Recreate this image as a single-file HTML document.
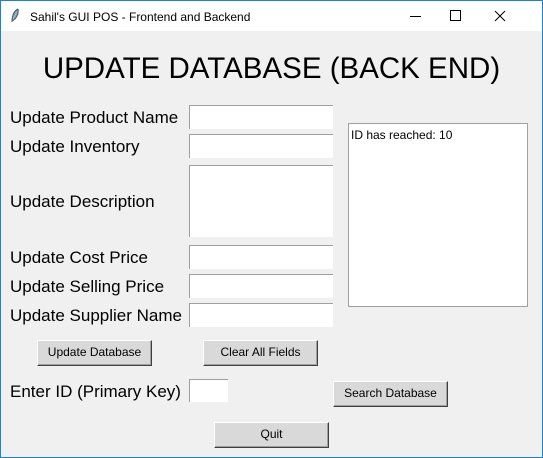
<!DOCTYPE html><html><head><style>
body{margin:0;width:543px;height:458px;overflow:hidden;font-family:"Liberation Sans",sans-serif;}
.win{position:absolute;left:0;top:0;width:541px;height:456px;border:1px solid #1883d7;background:#f0f0f0;}
.tb{position:absolute;left:0;top:0;width:541px;height:30px;background:#fff;}
.tt{position:absolute;left:29px;top:9px;font-size:12px;color:#000;}
.a{position:absolute;}
.lbl{position:absolute;left:9px;font-size:17px;color:#000;white-space:nowrap;}
.en{position:absolute;background:#fff;border-top:1px solid #a0a0a0;border-left:1px solid #a0a0a0;box-sizing:border-box;}
.btn{position:absolute;background:#d9d9d9;box-sizing:border-box;border-top:1px solid #fff;border-left:1px solid #fff;border-right:1px solid #404040;border-bottom:1px solid #404040;box-shadow:inset -1px -1px 0 #a0a0a0;font-size:12px;text-align:center;line-height:23px;width:115px;height:26px;}
</style></head><body><div class="win">
<div class="tb"><svg class="a" style="left:9px;top:7px" width="10" height="16"><path d="M8 1 C4 3 2 8 2 14 M8 1 C9 6 6 11 2 13" stroke="#456" fill="#7ab" stroke-width="1"/></svg>
<div class="tt">Sahil's GUI POS - Frontend and Backend</div>
<div class="a" style="left:409px;top:15px;width:11px;height:1px;background:#000"></div>
<div class="a" style="left:449px;top:9px;width:9px;height:9px;border:1px solid #000"></div>
<svg class="a" style="left:493px;top:9px" width="12" height="12"><path d="M1 1L11 11M11 1L1 11" stroke="#000"/></svg></div>
<div class="a" style="left:0;width:541px;top:51px;text-align:center;font-size:29.5px;color:#000">UPDATE DATABASE (BACK END)</div>
<div class="lbl" style="top:107px">Update Product Name</div>
<div class="lbl" style="top:136px">Update Inventory</div>
<div class="lbl" style="top:191px">Update Description</div>
<div class="lbl" style="top:247px">Update Cost Price</div>
<div class="lbl" style="top:276px">Update Selling Price</div>
<div class="lbl" style="top:305px">Update Supplier Name</div>
<div class="lbl" style="top:381px">Enter ID (Primary Key)</div>
<div class="en" style="left:188px;top:104px;width:144px;height:24px"></div>
<div class="en" style="left:188px;top:133px;width:144px;height:24px"></div>
<div class="en" style="left:188px;top:164px;width:144px;height:72px"></div>
<div class="en" style="left:188px;top:244px;width:144px;height:24px"></div>
<div class="en" style="left:188px;top:273px;width:144px;height:24px"></div>
<div class="en" style="left:188px;top:302px;width:144px;height:24px"></div>
<div class="en" style="left:188px;top:378px;width:39px;height:23px"></div>
<div class="en" style="left:347px;top:122px;width:180px;height:184px;border:1px solid #a0a0a0"><div style="font-size:12px;padding:4px 0 0 2px">ID has reached: 10</div></div>
<div class="btn" style="left:36px;top:339px">Update Database</div>
<div class="btn" style="left:202px;top:339px">Clear All Fields</div>
<div class="btn" style="left:332px;top:380px">Search Database</div>
<div class="btn" style="left:213px;top:421px">Quit</div>
</div></body></html>
